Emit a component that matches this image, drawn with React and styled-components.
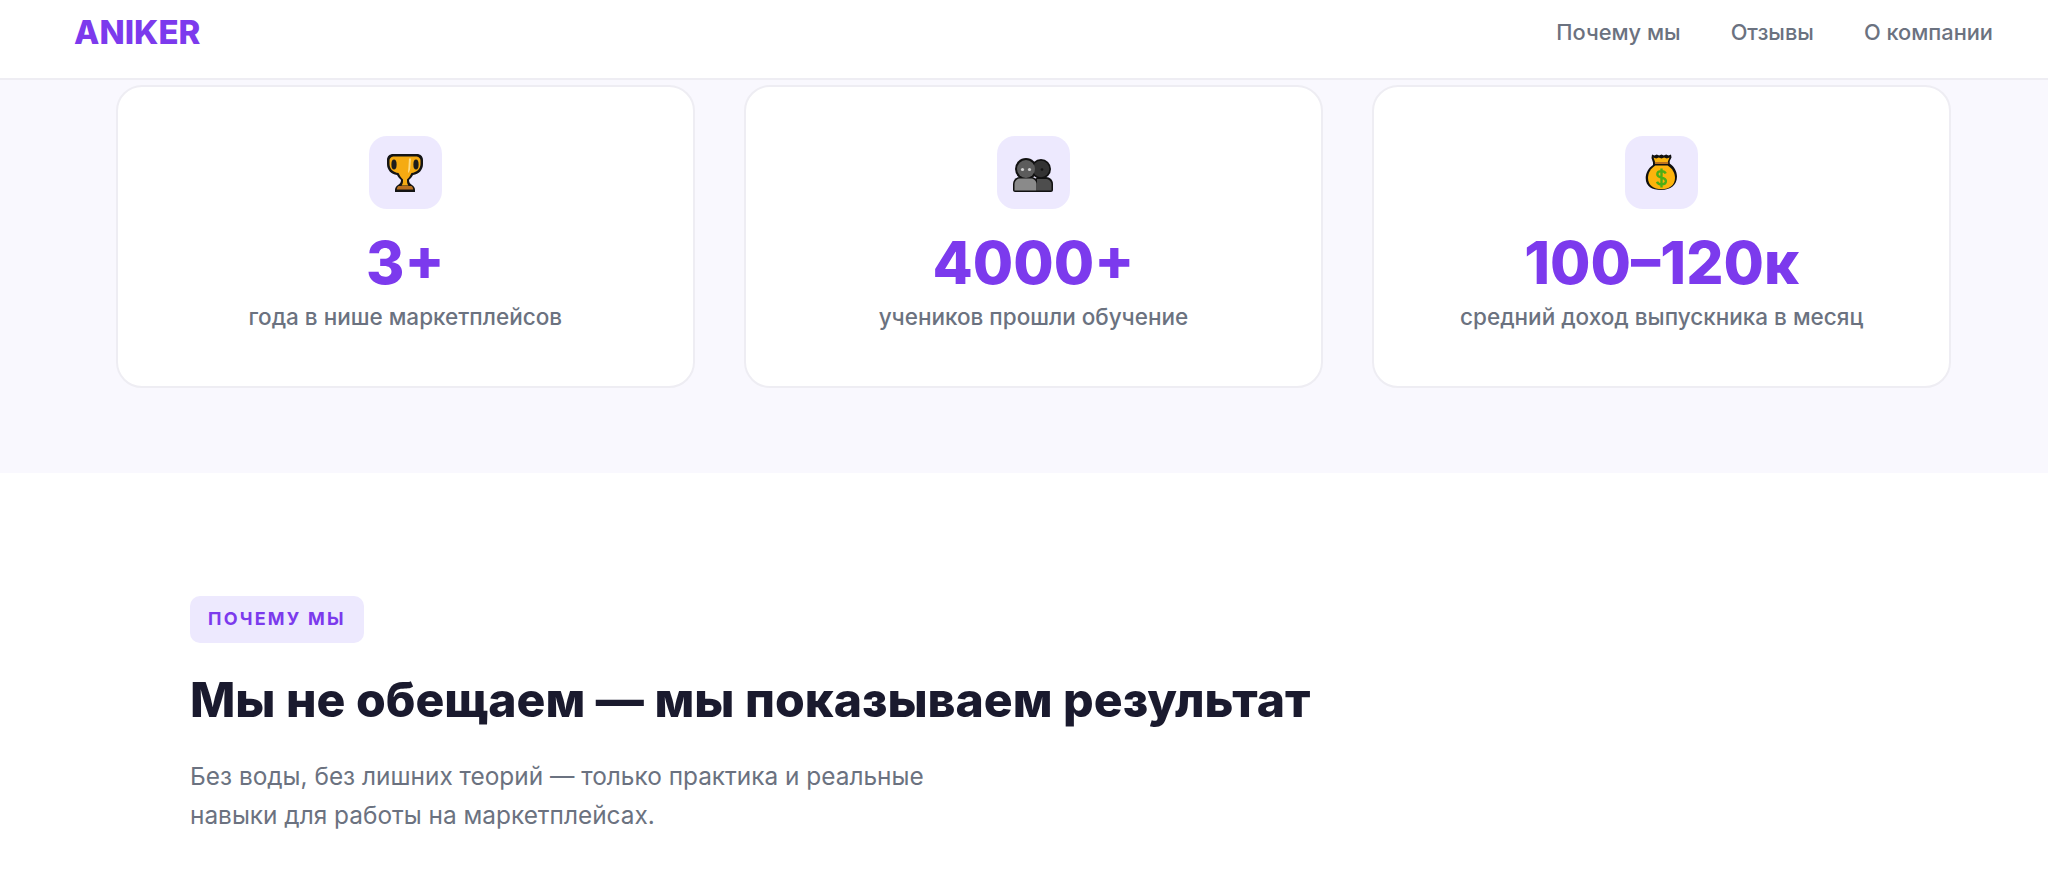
import React from "react";
import styled, { createGlobalStyle } from "styled-components";

const GlobalStyle = createGlobalStyle`
  html, body {
    margin: 0;
    padding: 0;
    background: #ffffff;
    font-family: "Inter", "Liberation Sans", sans-serif;
    overflow: hidden;
  }
  * { box-sizing: border-box; }
`;

const Header = styled.header`
  height: 80px;
  padding: 0 55px 14px 74px;
  display: flex;
  align-items: center;
  justify-content: space-between;
  background: #ffffff;
  border-bottom: 2px solid #eeedf3;
`;

const Logo = styled.div`
  font-size: 33px;
  font-weight: 800;
  color: #7c3aed;
`;

const Nav = styled.nav`
  display: flex;
  gap: 50px;
`;

const NavLink = styled.a`
  font-size: 21.800px;
  font-weight: 500;
  color: #6b7280;
`;

const StatsBand = styled.section`
  background: #f9f8fe;
  padding: 5px 97px 85px 116px;
  display: grid;
  grid-template-columns: repeat(3, 1fr);
  gap: 49.500px;
`;

const StatCard = styled.div`
  height: 303px;
  padding-top: 49px;
  display: flex;
  flex-direction: column;
  align-items: center;
  background: #ffffff;
  border: 2px solid #eeedf3;
  border-radius: 26px;
`;

const IconTile = styled.div`
  width: 73px;
  height: 73px;
  display: flex;
  align-items: center;
  justify-content: center;
  background: #ede9fe;
  border-radius: 18px;
`;

const StatValue = styled.div`
  margin-top: 16px;
  font-size: 58.500px;
  line-height: 75px;
  font-weight: 800;
  color: #7c3aed;
`;

const StatLabel = styled.div`
  margin-top: 2px;
  font-size: 22.500px;
  line-height: 30px;
  font-weight: 500;
  color: #6b7280;
`;

const WhySection = styled.section`
  padding: 123px 190px 0;
`;

const Badge = styled.div`
  display: inline-block;
  height: 47px;
  padding: 0 18px;
  line-height: 46px;
  background: #ede9fe;
  border-radius: 10px;
  font-size: 18px;
  font-weight: 700;
  letter-spacing: 2.200px;
  color: #7c3aed;
`;

const Title = styled.h2`
  margin: 28px 0 0;
  font-size: 48.100px;
  line-height: 58px;
  font-weight: 800;
  color: #1a1a2e;
`;

const Lead = styled.p`
  margin: 28px 0 0;
  max-width: 760px;
  font-size: 24.400px;
  line-height: 39px;
  color: #6b7280;
`;

const TrophyIcon = () => (
  <svg width="38" height="40" viewBox="0 0 38 40">
    <path d="M7 1h24c3 0 6 2 6 6v4c0 6-4 10-10 11-1 2-3 4-4 5 0 2 1 4 3 5 2 1 3 3 3 5v2H9v-2c0-2 1-4 3-5 2-1 3-3 3-5-1-1-3-3-4-5C5 21 1 17 1 11V7c0-4 3-6 6-6z" fill="#141414" />
    <path d="M8 3.500h22c2 0 4.500 1.500 4.500 4v3.500c0 5-4 8.500-9 9-1 2.500-3 5-4.500 6.500v1.500c0 2 .7 3.500 1.500 4.500h-7c.8-1 1.500-2.500 1.500-4.500v-1.500c-1.500-1.500-3.500-4-4.500-6.500-5-.5-9-4-9-9V7.500c0-2.500 2.500-4 4.500-4z" fill="#f5ab12" />
    <ellipse cx="8" cy="11.500" rx="2.600" ry="5" fill="#1c1c1c" />
    <ellipse cx="30" cy="11.500" rx="2.600" ry="5" fill="#1c1c1c" />
    <path d="M23 5.500h2l-.8 10c-.3 2-1.200 3.500-2.200 4.500z" fill="#ffdc85" />
    <path d="M12.500 33h13c1 .8 1.700 2 1.700 3.500H10.800c0-1.500.7-2.700 1.700-3.500z" fill="#b9701f" />
  </svg>
);

const PeopleIcon = () => (
  <svg width="40" height="41" viewBox="0 -6 40 41">
    <circle cx="28" cy="11" r="10" fill="#111" />
    <path d="M20 34V26c0-4 3-7 7-7h6c4 0 7 3 7 7v6c0 1-1 2-2 2z" fill="#111" />
    <circle cx="13" cy="11" r="11" fill="#111" />
    <path d="M2 34c-1 0-2-1-2-2V26c0-4 3-7 7-7h11c4 0 7 3 7 7v8z" fill="#111" />
    <circle cx="28" cy="11" r="8.300" fill="#333333" />
    <path d="M24 32.500V21h8.500c3 0 6 2 6 5.500v6z" fill="#4d4d4d" />
    <circle cx="13" cy="11" r="9" fill="#5c5c5c" />
    <path d="M1.500 32.500V26c0-3 2.500-5.500 5.500-5.500h11c3 0 5.500 2.500 5.500 5.500v6.500z" fill="#8a8a8a" />
    <circle cx="9.500" cy="11.500" r="1.600" fill="#cfcfcf" />
    <circle cx="16.500" cy="11.500" r="1.600" fill="#cfcfcf" />
    <circle cx="29" cy="11.500" r="1.300" fill="#141414" />
  </svg>
);

const MoneyBagIcon = () => (
  <svg width="33" height="39" viewBox="0 0 33 39">
    <path d="M7 1.500l2.400 1 2.400-1 2.300 1 2.400-1 2.300 1 2.400-1 2.400 1 2.400-1 .5 3-1.800 3.500v2.500c4.500 3 7.300 8 7.300 13 0 8.500-6.500 13.500-15.800 13.500S.7 33.500.700 25c0-5 2.800-10 7.300-13V9.500L6.500 5z" fill="#111" />
    <path d="M8.500 4.500l2.700.9 2.600-.9 2.700.9 2.600-.9 2.700.9 2.700-.9-1.600 4v1.500h-13V8.500z" fill="#fbb40f" />
    <path d="M10 9h13.200v2H10z" fill="#b9701f" />
    <path d="M10.300 12.500h12.400c4.500 2.800 7.300 7.500 7.300 12.500 0 7-5.500 11.300-13.500 11.300S3 32 3 25c0-5 2.800-9.700 7.300-12.500z" fill="#fdb40c" />
    <path d="M20.700 20.500c-.7-1.700-2.200-2.400-4.200-2.400-2.500 0-4.200 1.300-4.200 3.200 0 4.400 8.600 2.400 8.600 6.800 0 2-1.800 3.300-4.400 3.300-2.200 0-3.800-.9-4.500-2.600M16.500 15.500v19" fill="none" stroke="#4dae16" strokeWidth="2.400" />
  </svg>
);

const stats = [
  { icon: <TrophyIcon />, value: "3+", label: "года в нише маркетплейсов" },
  { icon: <PeopleIcon />, value: "4000+", label: "учеников прошли обучение" },
  { icon: <MoneyBagIcon />, value: "100–120к", label: "средний доход выпускника в месяц" },
];

export default function App() {
  return (
    <>
      <GlobalStyle />
      <Header>
        <Logo>ANIKER</Logo>
        <Nav>
          <NavLink>Почему мы</NavLink>
          <NavLink>Отзывы</NavLink>
          <NavLink>О компании</NavLink>
        </Nav>
      </Header>
      <StatsBand>
        {stats.map((s) => (
          <StatCard key={s.value}>
            <IconTile>{s.icon}</IconTile>
            <StatValue>{s.value}</StatValue>
            <StatLabel>{s.label}</StatLabel>
          </StatCard>
        ))}
      </StatsBand>
      <WhySection>
        <Badge>ПОЧЕМУ МЫ</Badge>
        <Title>Мы не обещаем — мы показываем результат</Title>
        <Lead>
          Без воды, без лишних теорий — только практика и реальные навыки для работы на маркетплейсах.
        </Lead>
      </WhySection>
    </>
  );
}
